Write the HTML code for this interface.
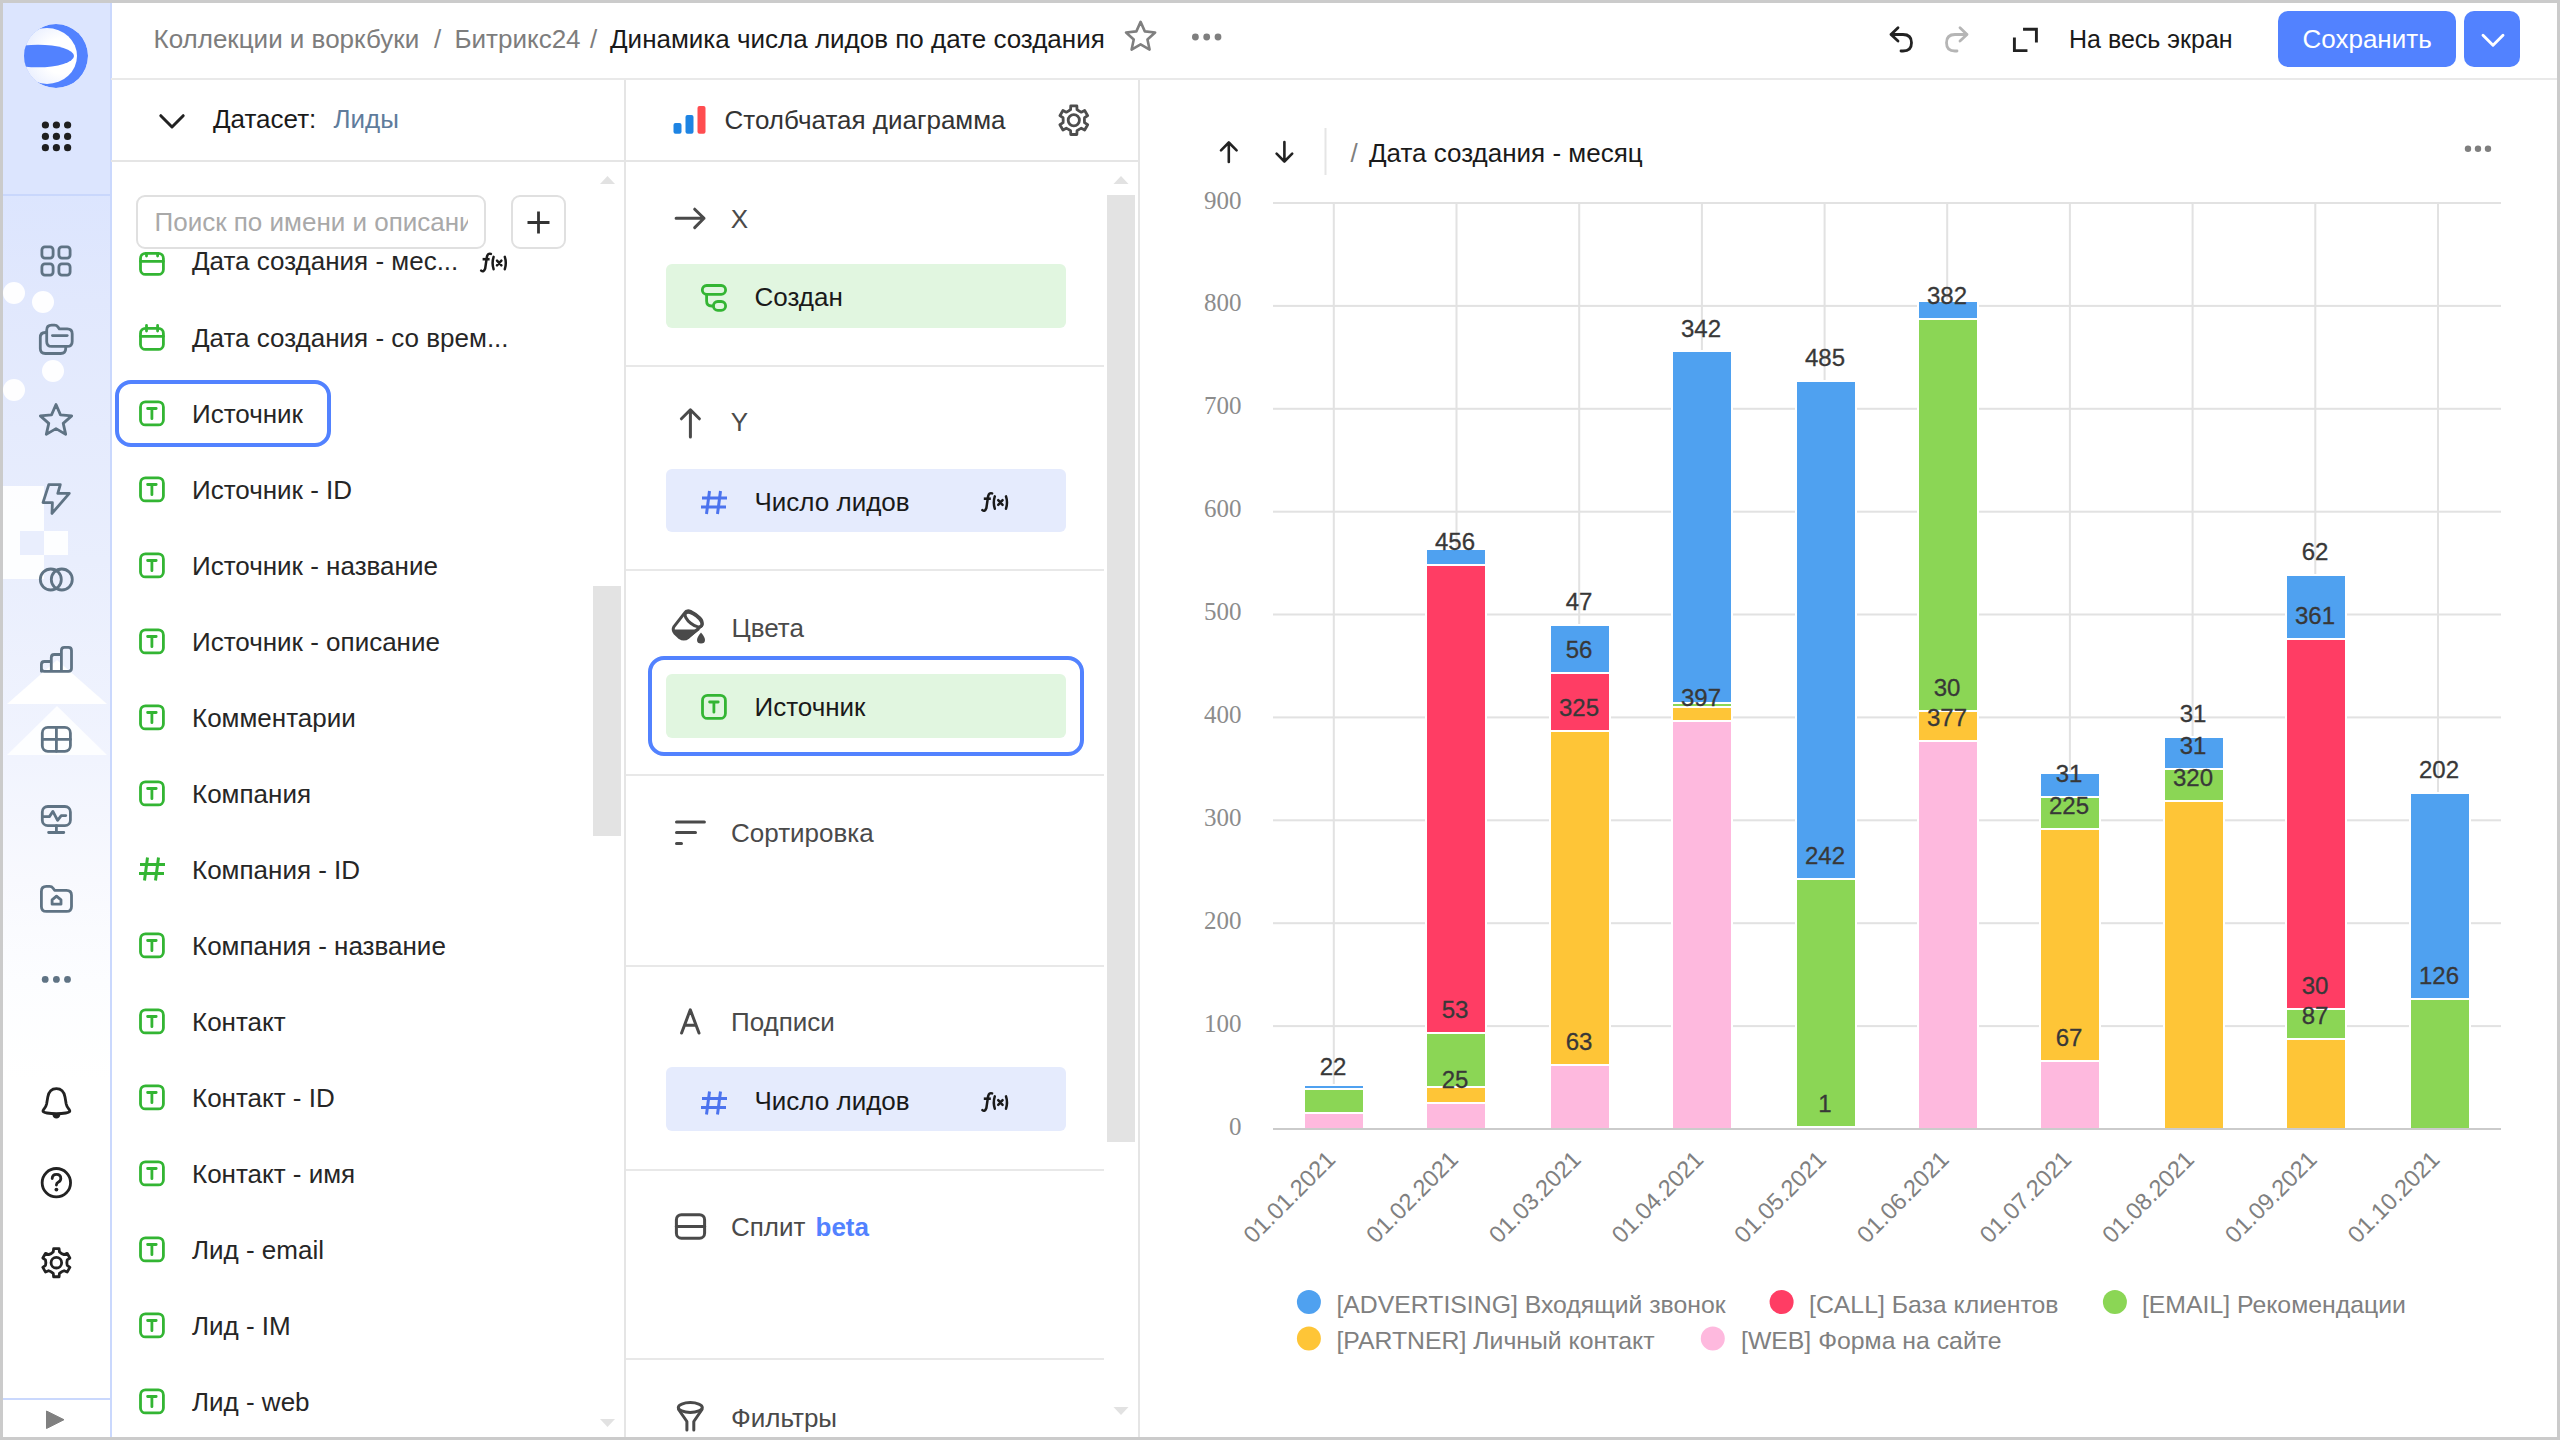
<!DOCTYPE html>
<html><head><meta charset="utf-8">
<style>
html,body{margin:0;padding:0;width:2560px;height:1440px;overflow:hidden;background:#cbcbcb;}
#app{position:absolute;left:3px;top:3px;width:2554px;height:1434px;background:#fff;overflow:hidden;}
#root{position:absolute;left:-3px;top:-3px;width:2560px;height:1440px;}
.t{position:absolute;white-space:nowrap;font-family:"Liberation Sans",sans-serif;}
svg{overflow:visible}
</style></head><body><div id="app"><div id="root">
<div style="position:absolute;left:0;top:0;width:111px;height:1440px;background:linear-gradient(180deg,#dce5fe 0px,#dce5fe 195px,#e1e8fd 300px,#e9eefd 560px,#f1f4fe 760px,#f8f9fe 880px,#fcfdff 980px,#ffffff 1080px);"></div>
<svg style="position:absolute;left:0;top:0" width="111" height="1440"><circle cx="14" cy="293" r="11" fill="#ffffff" opacity="0.95"/><circle cx="43" cy="302" r="11" fill="#ffffff" opacity="0.95"/><circle cx="53" cy="371" r="11" fill="#ffffff" opacity="0.95"/><circle cx="14" cy="390" r="11" fill="#ffffff" opacity="0.95"/><rect x="3" y="486" width="41" height="93" fill="#ffffff" opacity="0.9"/><rect x="20" y="531" width="24" height="24" fill="#e9eefd"/><rect x="44" y="531" width="24" height="24" fill="#ffffff" opacity="0.9"/><polygon points="7,704 57,660 107,704" fill="#ffffff" opacity="1"/><polygon points="7,755 57,706 107,755" fill="#ffffff" opacity="0.85"/></svg>
<div style="position:absolute;left:3px;top:194px;width:107px;height:2px;background:#c9d7fc;"></div>
<div style="position:absolute;left:110px;top:0px;width:2px;height:1440px;background:#cad8fd;"></div>
<div style="position:absolute;left:3px;top:1398px;width:107px;height:2px;background:#cad8fd;"></div>
<svg style="position:absolute;left:0;top:0" width="111" height="111">
<defs><clipPath id="lc"><circle cx="56" cy="56" r="32"/></clipPath>
<radialGradient id="lg" cx="0.75" cy="0.5" r="0.9"><stop offset="0.35" stop-color="#ffffff"/><stop offset="1" stop-color="#dbe4fe"/></radialGradient></defs>
<g clip-path="url(#lc)">
<circle cx="56" cy="56" r="32" fill="#5282ff"/>
<ellipse cx="47" cy="56" rx="30" ry="28" fill="url(#lg)"/>
<ellipse cx="38" cy="56" rx="36" ry="11.3" fill="#5282ff"/>
</g></svg>
<svg style="position:absolute;left:0;top:0" width="111" height="200"><circle cx="45.4" cy="125" r="3.6" fill="#1f1f1f"/><circle cx="56.4" cy="125" r="3.6" fill="#1f1f1f"/><circle cx="67.6" cy="125" r="3.6" fill="#1f1f1f"/><circle cx="45.4" cy="136.4" r="3.6" fill="#1f1f1f"/><circle cx="56.4" cy="136.4" r="3.6" fill="#1f1f1f"/><circle cx="67.6" cy="136.4" r="3.6" fill="#1f1f1f"/><circle cx="45.4" cy="147.7" r="3.6" fill="#1f1f1f"/><circle cx="56.4" cy="147.7" r="3.6" fill="#1f1f1f"/><circle cx="67.6" cy="147.7" r="3.6" fill="#1f1f1f"/></svg>
<svg style="position:absolute;left:0;top:0" width="111" height="1440"><rect x="41.9" y="246.9" width="11.2" height="11.2" rx="3" fill="none" stroke="#5f7384" stroke-width="2.8" stroke-linecap="round" stroke-linejoin="round"/><rect x="58.9" y="246.9" width="11.2" height="11.2" rx="3" fill="none" stroke="#5f7384" stroke-width="2.8" stroke-linecap="round" stroke-linejoin="round"/><rect x="41.9" y="263.9" width="11.2" height="11.2" rx="3" fill="none" stroke="#5f7384" stroke-width="2.8" stroke-linecap="round" stroke-linejoin="round"/><rect x="58.9" y="263.9" width="11.2" height="11.2" rx="3" fill="none" stroke="#5f7384" stroke-width="2.8" stroke-linecap="round" stroke-linejoin="round"/><path d="M46.7 330.2 Q46.7 325.2 51.7 325.2 L54.5 325.2 Q56.6 325.2 57.9 326.9 L59.3 328.8 L67.2 328.8 Q72.2 328.8 72.2 333.8 L72.2 341.4 Q72.2 346.4 67.2 346.4 L51.7 346.4 Q46.7 346.4 46.7 341.4 Z" fill="none" stroke="#5f7384" stroke-width="2.8" stroke-linecap="round" stroke-linejoin="round"/><path d="M46.7 332.5 L45.3 332.5 Q40.3 332.5 40.3 337.5 L40.3 348.5 Q40.3 353.5 45.3 353.5 L60.7 353.5 Q65.7 353.5 65.7 348.5 L65.7 346.4" fill="none" stroke="#5f7384" stroke-width="2.8" stroke-linecap="round" stroke-linejoin="round"/><path d="M52.4 335.6 L67.2 335.6" fill="none" stroke="#5f7384" stroke-width="2.8" stroke-linecap="round" stroke-linejoin="round"/><polygon points="56.00,404.50 60.47,414.85 71.69,415.90 63.23,423.35 65.70,434.35 56.00,428.60 46.30,434.35 48.77,423.35 40.31,415.90 51.53,414.85" fill="none" stroke="#5f7384" stroke-width="2.8" stroke-linecap="round" stroke-linejoin="round"/><path d="M48.8 484.6 L60.3 484.6 L57.8 493.4 L69.3 493.4 L52 513.4 L52.4 502.6 L43 502.6 Z" fill="none" stroke="#5f7384" stroke-width="2.8" stroke-linecap="round" stroke-linejoin="round"/><circle cx="50.8" cy="579.5" r="10.5" fill="none" stroke="#5f7384" stroke-width="2.8" stroke-linecap="round" stroke-linejoin="round"/><circle cx="61.8" cy="579.5" r="10.5" fill="none" stroke="#5f7384" stroke-width="2.8" stroke-linecap="round" stroke-linejoin="round"/><path d="M41.4 671.3 L41.4 664.5 Q41.4 661.5 44.4 661.5 L51.3 661.5 L51.3 657.5 Q51.3 654.5 54.3 654.5 L61.4 654.5 L61.4 650.4 Q61.4 647.4 64.4 647.4 L68.5 647.4 Q71.5 647.4 71.5 650.4 L71.5 668.3 Q71.5 671.3 68.5 671.3 L44.4 671.3 Q41.4 671.3 41.4 668.3 Z M51.3 661.5 V671.3 M61.4 654.5 V671.3" fill="none" stroke="#5f7384" stroke-width="2.8" stroke-linecap="round" stroke-linejoin="round"/><rect x="42.3" y="727.4" width="28.1" height="23.9" rx="5.5" fill="none" stroke="#5f7384" stroke-width="2.8" stroke-linecap="round" stroke-linejoin="round"/><path d="M56.4 727.4 V751.3 M42.3 739.4 H70.4" fill="none" stroke="#5f7384" stroke-width="2.8" stroke-linecap="round" stroke-linejoin="round"/><rect x="42.3" y="806.5" width="28.1" height="19.2" rx="5.5" fill="none" stroke="#5f7384" stroke-width="2.8" stroke-linecap="round" stroke-linejoin="round"/><path d="M56.4 825.7 V832.5 M48.6 832.5 H63.8" fill="none" stroke="#5f7384" stroke-width="2.8" stroke-linecap="round" stroke-linejoin="round"/><path d="M43.5 816.6 L49.4 816.6 L52.9 811.4 L57.6 820.3 L61.2 815.6 L65.8 815.6" fill="none" stroke="#5f7384" stroke-width="2.8" stroke-linecap="round" stroke-linejoin="round"/><path d="M41.4 891.4 Q41.4 886.4 46.4 886.4 L49.6 886.4 Q51.8 886.4 53.1 888.2 L54.6 890.3 L66.5 890.3 Q71.5 890.3 71.5 895.3 L71.5 906.4 Q71.5 911.4 66.5 911.4 L46.4 911.4 Q41.4 911.4 41.4 906.4 Z" fill="none" stroke="#5f7384" stroke-width="2.8" stroke-linecap="round" stroke-linejoin="round"/><path d="M52.1 899.9 L56.5 896.1 L61 899.9 L61 904.2 L52.1 904.2 Z" fill="none" stroke="#5f7384" stroke-width="2.8" stroke-linecap="round" stroke-linejoin="round"/><circle cx="45.2" cy="979.4" r="3.4" fill="#5f7384"/><circle cx="56.4" cy="979.4" r="3.4" fill="#5f7384"/><circle cx="67.5" cy="979.4" r="3.4" fill="#5f7384"/><path d="M56.4 1088.6 C50.5 1088.6 48.5 1093 47.8 1097 L46.6 1104 C46 1107 44.5 1108.5 43.5 1109.8 C42 1111.7 44 1112.6 47 1113 C50 1113.5 53 1113.7 56.4 1113.7 C59.8 1113.7 62.8 1113.5 65.8 1113 C68.8 1112.6 70.8 1111.7 69.3 1109.8 C68.3 1108.5 66.8 1107 66.2 1104 L65 1097 C64.3 1093 62.3 1088.6 56.4 1088.6 Z" fill="none" stroke="#222222" stroke-width="2.8" stroke-linecap="round" stroke-linejoin="round"/><path d="M52.3 1114.6 L60.5 1114.6 Q59.8 1118.5 56.4 1118.5 Q53 1118.5 52.3 1114.6 Z" fill="#222222"/><circle cx="56.35" cy="1182.7" r="14.2" fill="none" stroke="#222222" stroke-width="2.8" stroke-linecap="round" stroke-linejoin="round"/><path d="M52.2 1178.6 Q52.2 1174.3 56.5 1174.3 Q60.8 1174.3 60.8 1178.4 Q60.8 1180.8 58.5 1182 Q56.4 1183.2 56.4 1185" fill="none" stroke="#222222" stroke-width="2.8" stroke-linecap="round" stroke-linejoin="round"/><circle cx="56.4" cy="1189.6" r="1.9" fill="#222222"/><path d="M51.10 1253.61 L53.26 1251.93 L53.62 1248.66 L59.08 1248.66 L59.44 1251.93 L61.60 1253.61 L64.13 1254.64 L67.14 1253.32 L69.87 1258.04 L67.22 1259.99 L66.85 1262.70 L67.22 1265.41 L69.87 1267.36 L67.14 1272.08 L64.13 1270.76 L61.60 1271.79 L59.44 1273.47 L59.08 1276.74 L53.62 1276.74 L53.26 1273.47 L51.10 1271.79 L48.57 1270.76 L45.56 1272.08 L42.83 1267.36 L45.48 1265.41 L45.85 1262.70 L45.48 1259.99 L42.83 1258.04 L45.56 1253.32 L48.57 1254.64 Z" fill="none" stroke="#222222" stroke-width="2.8" stroke-linecap="round" stroke-linejoin="round"/><circle cx="56.35" cy="1262.7" r="5.3" fill="none" stroke="#222222" stroke-width="2.8" stroke-linecap="round" stroke-linejoin="round"/><path d="M46.5 1411 L46.5 1428.5 L64 1419.7 Z" fill="#808080" stroke="#808080" stroke-width="1" stroke-linejoin="round"/></svg>
<div style="position:absolute;left:111px;top:78px;width:2449px;height:2px;background:#e9e9e9;"></div>
<div class="t" style="left:153.5px;top:25.69px;font-size:26px;line-height:26px;color:#7d7d7d;font-weight:normal;font-family:"Liberation Sans", sans-serif;">Коллекции и воркбуки</div>
<div class="t" style="left:434px;top:25.69px;font-size:26px;line-height:26px;color:#7d7d7d;font-weight:normal;font-family:"Liberation Sans", sans-serif;">/</div>
<div class="t" style="left:454.5px;top:25.69px;font-size:26px;line-height:26px;color:#7d7d7d;font-weight:normal;font-family:"Liberation Sans", sans-serif;">Битрикс24</div>
<div class="t" style="left:590px;top:25.69px;font-size:26px;line-height:26px;color:#7d7d7d;font-weight:normal;font-family:"Liberation Sans", sans-serif;">/</div>
<div class="t" style="left:610px;top:25.69px;font-size:26px;line-height:26px;color:#1a1a1a;font-weight:normal;font-family:"Liberation Sans", sans-serif;">Динамика числа лидов по дате создания</div>
<svg style="position:absolute;left:0;top:0" width="2560" height="80"><polygon points="1140.60,21.90 1144.83,31.38 1155.15,32.47 1147.45,39.42 1149.59,49.58 1140.60,44.40 1131.61,49.58 1133.75,39.42 1126.05,32.47 1136.37,31.38" fill="none" stroke="#7f7f7f" stroke-width="2.6" stroke-linejoin="round"/><circle cx="1195.4" cy="37" r="3.4" fill="#7f7f7f"/><circle cx="1206.7" cy="37" r="3.4" fill="#7f7f7f"/><circle cx="1218" cy="37" r="3.4" fill="#7f7f7f"/><path d="M1891 34.5 L1898 27.8 M1891 34.5 L1898 41 M1891 34.5 L1903 34.5 Q1911.5 34.5 1911.5 42.7 Q1911.5 51 1903 51 L1901 51" fill="none" stroke="#222" stroke-width="2.8" stroke-linecap="round" stroke-linejoin="round"/><path d="M1967 34.5 L1960 27.8 M1967 34.5 L1960 41 M1967 34.5 L1955 34.5 Q1946.5 34.5 1946.5 42.7 Q1946.5 51 1955 51 L1957 51" fill="none" stroke="#b5b5b5" stroke-width="2.8" stroke-linecap="round" stroke-linejoin="round"/><path d="M2024.5 29.2 L2036.4 29.2 L2036.4 41 M2014.4 39 L2014.4 50.6 L2026 50.6" fill="none" stroke="#222" stroke-width="2.9" stroke-linecap="square"/></svg>
<div class="t" style="left:2069px;top:26.64px;font-size:25px;line-height:25px;color:#1a1a1a;font-weight:normal;font-family:"Liberation Sans", sans-serif;">На весь экран</div>
<div style="position:absolute;left:2278px;top:11px;width:178px;height:56px;background:#5282ff;border-radius:10px"></div>
<div class="t" style="left:2302.5px;top:25.99px;font-size:26px;line-height:26px;color:#ffffff;font-weight:normal;font-family:"Liberation Sans", sans-serif;">Сохранить</div>
<div style="position:absolute;left:2464px;top:11px;width:56px;height:56px;background:#5282ff;border-radius:10px"></div>
<svg style="position:absolute;left:0;top:0" width="2560" height="80"><path d="M2483 35.3 L2493 45.3 L2503 35.3" fill="none" stroke="#fff" stroke-width="2.9" stroke-linecap="round" stroke-linejoin="round"/></svg>
<div style="position:absolute;left:111px;top:160px;width:514px;height:2px;background:#e5e5e5;"></div>
<div style="position:absolute;left:624px;top:80px;width:2px;height:1360px;background:#e5e5e5;"></div>
<svg style="position:absolute;left:0;top:0" width="640" height="170"><path d="M160.8 115.7 L172 127 L183.2 115.7" fill="none" stroke="#222" stroke-width="3" stroke-linecap="round" stroke-linejoin="round"/></svg>
<div class="t" style="left:213px;top:105.69px;font-size:26px;line-height:26px;color:#1a1a1a;font-weight:normal;font-family:"Liberation Sans", sans-serif;">Датасет:</div>
<div class="t" style="left:333.5px;top:105.69px;font-size:26px;line-height:26px;color:#5f7c9c;font-weight:normal;font-family:"Liberation Sans", sans-serif;">Лиды</div>
<svg style="position:absolute;left:0;top:0" width="640" height="1440"><path d="M600 184 L607.5 176 L615 184 Z" fill="#e2e2e2"/><path d="M600 1419 L607.5 1427 L615 1419 Z" fill="#e2e2e2"/></svg>
<div style="position:absolute;left:593px;top:586px;width:28px;height:250px;background:#e3e3e3;"></div>
<div class="t" style="left:192px;top:248.19px;font-size:26px;line-height:26px;color:#262626;font-weight:normal;font-family:"Liberation Sans", sans-serif;">Дата создания - мес...</div>
<div class="t" style="left:192px;top:325.19px;font-size:26px;line-height:26px;color:#262626;font-weight:normal;font-family:"Liberation Sans", sans-serif;">Дата создания - со врем...</div>
<div class="t" style="left:192px;top:401.19px;font-size:26px;line-height:26px;color:#262626;font-weight:normal;font-family:"Liberation Sans", sans-serif;">Источник</div>
<div class="t" style="left:192px;top:477.19px;font-size:26px;line-height:26px;color:#262626;font-weight:normal;font-family:"Liberation Sans", sans-serif;">Источник - ID</div>
<div class="t" style="left:192px;top:553.19px;font-size:26px;line-height:26px;color:#262626;font-weight:normal;font-family:"Liberation Sans", sans-serif;">Источник - название</div>
<div class="t" style="left:192px;top:629.19px;font-size:26px;line-height:26px;color:#262626;font-weight:normal;font-family:"Liberation Sans", sans-serif;">Источник - описание</div>
<div class="t" style="left:192px;top:705.19px;font-size:26px;line-height:26px;color:#262626;font-weight:normal;font-family:"Liberation Sans", sans-serif;">Комментарии</div>
<div class="t" style="left:192px;top:781.19px;font-size:26px;line-height:26px;color:#262626;font-weight:normal;font-family:"Liberation Sans", sans-serif;">Компания</div>
<div class="t" style="left:192px;top:857.19px;font-size:26px;line-height:26px;color:#262626;font-weight:normal;font-family:"Liberation Sans", sans-serif;">Компания - ID</div>
<div class="t" style="left:192px;top:933.19px;font-size:26px;line-height:26px;color:#262626;font-weight:normal;font-family:"Liberation Sans", sans-serif;">Компания - название</div>
<div class="t" style="left:192px;top:1009.19px;font-size:26px;line-height:26px;color:#262626;font-weight:normal;font-family:"Liberation Sans", sans-serif;">Контакт</div>
<div class="t" style="left:192px;top:1085.19px;font-size:26px;line-height:26px;color:#262626;font-weight:normal;font-family:"Liberation Sans", sans-serif;">Контакт - ID</div>
<div class="t" style="left:192px;top:1161.19px;font-size:26px;line-height:26px;color:#262626;font-weight:normal;font-family:"Liberation Sans", sans-serif;">Контакт - имя</div>
<div class="t" style="left:192px;top:1237.19px;font-size:26px;line-height:26px;color:#262626;font-weight:normal;font-family:"Liberation Sans", sans-serif;">Лид - email</div>
<div class="t" style="left:192px;top:1313.19px;font-size:26px;line-height:26px;color:#262626;font-weight:normal;font-family:"Liberation Sans", sans-serif;">Лид - IM</div>
<div class="t" style="left:192px;top:1389.19px;font-size:26px;line-height:26px;color:#262626;font-weight:normal;font-family:"Liberation Sans", sans-serif;">Лид - web</div>
<svg style="position:absolute;left:0;top:0" width="640" height="1440"><rect x="140.5" y="253.4" width="22.9" height="21" rx="5" fill="none" stroke="#33b533" stroke-width="2.8"/><path d="M140.5 261.3 H163.4 M146.5 250.5 V256 M157.6 250.5 V256" stroke="#33b533" stroke-width="2.8" stroke-linecap="round"/><g transform="translate(0.00,0.00)"><path d="M481.2 270.6 Q483.6 272.6 485.2 268.5 L486.9 256.8 Q488 252.8 490.9 253.9" fill="none" stroke="#1a1a1a" stroke-width="2.5" stroke-linecap="round"/><path d="M482.6 259.2 H489.6" stroke="#1a1a1a" stroke-width="2.6"/><path d="M493.6 256.9 Q491.6 263 493.6 269.2 M504.8 256.9 Q506.8 263 504.8 269.2" fill="none" stroke="#1a1a1a" stroke-width="2.5" stroke-linecap="round" stroke-width="2.3"/><path d="M497 260.7 L501.4 265.3 M501.4 260.7 L497 265.3" fill="none" stroke="#1a1a1a" stroke-width="2.5" stroke-linecap="round" stroke-width="2.3"/></g><rect x="140.5" y="328.4" width="22.9" height="21" rx="5" fill="none" stroke="#33b533" stroke-width="2.8"/><path d="M140.5 336.3 H163.4 M146.5 325.5 V331.0 M157.6 325.5 V331.0" stroke="#33b533" stroke-width="2.8" stroke-linecap="round"/><rect x="140.5" y="401.9" width="22.9" height="23" rx="5" fill="none" stroke="#33b533" stroke-width="2.8"/><path d="M147.6 408.5 H156.2 M151.9 408.5 V418.7" stroke="#33b533" stroke-width="2.8" stroke-linecap="round"/><rect x="140.5" y="477.9" width="22.9" height="23" rx="5" fill="none" stroke="#33b533" stroke-width="2.8"/><path d="M147.6 484.5 H156.2 M151.9 484.5 V494.7" stroke="#33b533" stroke-width="2.8" stroke-linecap="round"/><rect x="140.5" y="553.9" width="22.9" height="23" rx="5" fill="none" stroke="#33b533" stroke-width="2.8"/><path d="M147.6 560.5 H156.2 M151.9 560.5 V570.7" stroke="#33b533" stroke-width="2.8" stroke-linecap="round"/><rect x="140.5" y="629.9" width="22.9" height="23" rx="5" fill="none" stroke="#33b533" stroke-width="2.8"/><path d="M147.6 636.5 H156.2 M151.9 636.5 V646.7" stroke="#33b533" stroke-width="2.8" stroke-linecap="round"/><rect x="140.5" y="705.9" width="22.9" height="23" rx="5" fill="none" stroke="#33b533" stroke-width="2.8"/><path d="M147.6 712.5 H156.2 M151.9 712.5 V722.7" stroke="#33b533" stroke-width="2.8" stroke-linecap="round"/><rect x="140.5" y="781.9" width="22.9" height="23" rx="5" fill="none" stroke="#33b533" stroke-width="2.8"/><path d="M147.6 788.5 H156.2 M151.9 788.5 V798.7" stroke="#33b533" stroke-width="2.8" stroke-linecap="round"/><path d="M147.5 857.5 L144.5 880.5 M158.5 857.5 L155.5 880.5 M140 864.5 H165 M139 873.5 H164" stroke="#33b533" stroke-width="3" stroke-linecap="butt"/><rect x="140.5" y="933.9" width="22.9" height="23" rx="5" fill="none" stroke="#33b533" stroke-width="2.8"/><path d="M147.6 940.5 H156.2 M151.9 940.5 V950.7" stroke="#33b533" stroke-width="2.8" stroke-linecap="round"/><rect x="140.5" y="1009.9" width="22.9" height="23" rx="5" fill="none" stroke="#33b533" stroke-width="2.8"/><path d="M147.6 1016.5 H156.2 M151.9 1016.5 V1026.7" stroke="#33b533" stroke-width="2.8" stroke-linecap="round"/><rect x="140.5" y="1085.9" width="22.9" height="23" rx="5" fill="none" stroke="#33b533" stroke-width="2.8"/><path d="M147.6 1092.5 H156.2 M151.9 1092.5 V1102.7" stroke="#33b533" stroke-width="2.8" stroke-linecap="round"/><rect x="140.5" y="1161.9" width="22.9" height="23" rx="5" fill="none" stroke="#33b533" stroke-width="2.8"/><path d="M147.6 1168.5 H156.2 M151.9 1168.5 V1178.7" stroke="#33b533" stroke-width="2.8" stroke-linecap="round"/><rect x="140.5" y="1237.9" width="22.9" height="23" rx="5" fill="none" stroke="#33b533" stroke-width="2.8"/><path d="M147.6 1244.5 H156.2 M151.9 1244.5 V1254.7" stroke="#33b533" stroke-width="2.8" stroke-linecap="round"/><rect x="140.5" y="1313.9" width="22.9" height="23" rx="5" fill="none" stroke="#33b533" stroke-width="2.8"/><path d="M147.6 1320.5 H156.2 M151.9 1320.5 V1330.7" stroke="#33b533" stroke-width="2.8" stroke-linecap="round"/><rect x="140.5" y="1389.9" width="22.9" height="23" rx="5" fill="none" stroke="#33b533" stroke-width="2.8"/><path d="M147.6 1396.5 H156.2 M151.9 1396.5 V1406.7" stroke="#33b533" stroke-width="2.8" stroke-linecap="round"/></svg>
<div style="position:absolute;left:112px;top:164px;width:477px;height:88px;background:#ffffff;"></div>
<div style="position:absolute;left:136px;top:195px;width:346px;height:50px;border:2px solid #e0e0e0;border-radius:9px;background:#fff"></div>
<div style="position:absolute;left:150px;top:200px;width:318px;height:44px;overflow:hidden"><div class="t" style="left:4.5px;top:8.79px;font-size:26px;line-height:26px;color:#a9a9a9;font-weight:normal;font-family:"Liberation Sans", sans-serif;">Поиск по имени и описанию</div></div>
<div style="position:absolute;left:511px;top:195px;width:51px;height:50px;border:2px solid #e0e0e0;border-radius:9px;background:#fff"></div>
<svg style="position:absolute;left:0;top:0" width="640" height="300"><path d="M538.5 211.5 V233.5 M527.5 222.5 H549.5" stroke="#333" stroke-width="2.8"/></svg>
<div style="position:absolute;left:115px;top:380px;width:208px;height:59px;border:4.5px solid #5282ff;border-radius:16px"></div>
<div style="position:absolute;left:626px;top:160px;width:512px;height:2px;background:#e5e5e5;"></div>
<div style="position:absolute;left:1138px;top:80px;width:2px;height:1360px;background:#e5e5e5;"></div>
<div style="position:absolute;left:626px;top:365px;width:478px;height:2px;background:#e8e8e8;"></div>
<div style="position:absolute;left:626px;top:569px;width:478px;height:2px;background:#e8e8e8;"></div>
<div style="position:absolute;left:626px;top:774px;width:478px;height:2px;background:#e8e8e8;"></div>
<div style="position:absolute;left:626px;top:965px;width:478px;height:2px;background:#e8e8e8;"></div>
<div style="position:absolute;left:626px;top:1169px;width:478px;height:2px;background:#e8e8e8;"></div>
<div style="position:absolute;left:626px;top:1358px;width:478px;height:2px;background:#e8e8e8;"></div>
<svg style="position:absolute;left:0;top:0" width="1140" height="1440"><rect x="673.5" y="123.1" width="8" height="10.6" rx="2" fill="#1e84e3"/><rect x="685.5" y="115.1" width="8" height="18.6" rx="2" fill="#1e84e3"/><rect x="697.5" y="106.1" width="8" height="27.6" rx="2" fill="#ff4d50"/><path d="M1068.50 111.02 L1070.58 109.68 L1070.76 105.92 L1076.84 105.92 L1077.02 109.68 L1079.10 111.02 L1081.30 112.16 L1084.65 110.43 L1087.69 115.69 L1084.52 117.73 L1084.40 120.20 L1084.52 122.67 L1087.69 124.71 L1084.65 129.97 L1081.30 128.24 L1079.10 129.38 L1077.02 130.72 L1076.84 134.48 L1070.76 134.48 L1070.58 130.72 L1068.50 129.38 L1066.30 128.24 L1062.95 129.97 L1059.91 124.71 L1063.08 122.67 L1063.20 120.20 L1063.08 117.73 L1059.91 115.69 L1062.95 110.43 L1066.30 112.16 Z" fill="none" stroke="#4d4d4d" stroke-width="2.8" stroke-linejoin="round"/><circle cx="1073.8" cy="120.2" r="5.6" fill="none" stroke="#4d4d4d" stroke-width="2.8"/><path d="M1113.5 184 L1121 176 L1128.5 184 Z" fill="#e2e2e2"/><path d="M1113.5 1407 L1121 1415 L1128.5 1407 Z" fill="#e2e2e2"/><path d="M676.1 218.3 H704 M694.7 209.2 L704 218.3 L694.7 227.6" fill="none" stroke="#4a4a4a" stroke-width="3" stroke-linecap="round" stroke-linejoin="round"/><path d="M690.4 437 V409.8 M681.4 418.8 L690.4 409.8 L699.4 418.8" fill="none" stroke="#4a4a4a" stroke-width="3" stroke-linecap="round" stroke-linejoin="round"/><path d="M684.3 613.3 Q686.6 609.8 690.6 611.4 Q695.5 613.8 699.8 617.8 Q703.6 621.6 701.6 625.6 L688.5 637.2 Q684 640.6 679.8 637.8 L675 633.4 Q672 630.2 674 626.6 Z" fill="none" stroke="#4a4a4a" stroke-width="3" stroke-linecap="round" stroke-linejoin="round" stroke-width="2.8"/><ellipse cx="693.6" cy="619.6" rx="10.2" ry="4.6" transform="rotate(38 693.6 619.6)" fill="none" stroke="#4a4a4a" stroke-width="3" stroke-linecap="round" stroke-linejoin="round" stroke-width="2.8"/><path d="M673.6 629.6 L700.2 629.6 L688.5 638.5 Q684 641 680 638.4 L675.2 634.2 Q672.8 631.8 673.6 629.6 Z" fill="#4a4a4a"/><path d="M701 632.6 Q697 637.3 697 640 Q697 643.5 701 643.5 Q705 643.5 705 640 Q705 637.3 701 632.6 Z" fill="#4a4a4a"/><path d="M676.5 822 H704.4 M676.5 832.4 H695.5 M676.5 843.4 H681.5" fill="none" stroke="#4a4a4a" stroke-width="3" stroke-linecap="round" stroke-linejoin="round"/><path d="M681.6 1033 L690.3 1009.8 L699 1033 M684.6 1025.2 H696" fill="none" stroke="#4a4a4a" stroke-width="3" stroke-linecap="round" stroke-linejoin="round" stroke-width="2.9" stroke-linecap="butt" stroke-linejoin="miter"/><rect x="676.4" y="1214.7" width="28.2" height="23.5" rx="5" fill="none" stroke="#4a4a4a" stroke-width="3" stroke-linecap="round" stroke-linejoin="round" stroke-width="2.8"/><path d="M676.4 1226.5 H704.6" fill="none" stroke="#4a4a4a" stroke-width="3" stroke-linecap="round" stroke-linejoin="round" stroke-width="2.8"/><ellipse cx="690.3" cy="1407.5" rx="12" ry="4.9" fill="none" stroke="#4a4a4a" stroke-width="3" stroke-linecap="round" stroke-linejoin="round" stroke-width="2.9"/><path d="M678.6 1409.5 L686.9 1421.5 V1430 M702 1409.5 L693.8 1421.5 V1430" fill="none" stroke="#4a4a4a" stroke-width="3" stroke-linecap="round" stroke-linejoin="round" stroke-width="2.9" stroke-linecap="butt"/></svg>
<div style="position:absolute;left:1107px;top:195px;width:28px;height:947px;background:#e3e3e3;"></div>
<div class="t" style="left:724.5px;top:106.69px;font-size:26px;line-height:26px;color:#333333;font-weight:normal;font-family:"Liberation Sans", sans-serif;">Столбчатая диаграмма</div>
<div class="t" style="left:730.8px;top:205.99px;font-size:26px;line-height:26px;color:#4a4a4a;font-weight:normal;font-family:"Liberation Sans", sans-serif;">X</div>
<div class="t" style="left:730.8px;top:408.99px;font-size:26px;line-height:26px;color:#4a4a4a;font-weight:normal;font-family:"Liberation Sans", sans-serif;">Y</div>
<div class="t" style="left:731.5px;top:614.69px;font-size:26px;line-height:26px;color:#4a4a4a;font-weight:normal;font-family:"Liberation Sans", sans-serif;">Цвета</div>
<div class="t" style="left:731px;top:819.79px;font-size:26px;line-height:26px;color:#4a4a4a;font-weight:normal;font-family:"Liberation Sans", sans-serif;">Сортировка</div>
<div class="t" style="left:731px;top:1008.99px;font-size:26px;line-height:26px;color:#4a4a4a;font-weight:normal;font-family:"Liberation Sans", sans-serif;">Подписи</div>
<div class="t" style="left:731px;top:1214.29px;font-size:26px;line-height:26px;color:#4a4a4a;font-weight:normal;font-family:"Liberation Sans", sans-serif;">Сплит</div>
<div class="t" style="left:815.5px;top:1214.29px;font-size:26px;line-height:26px;color:#5282ff;font-weight:bold;font-family:"Liberation Sans", sans-serif;">beta</div>
<div class="t" style="left:731px;top:1404.69px;font-size:26px;line-height:26px;color:#4a4a4a;font-weight:normal;font-family:"Liberation Sans", sans-serif;">Фильтры</div>
<div style="position:absolute;left:666px;top:264px;width:400px;height:64px;background:#e1f6e0;border-radius:6px"></div>
<div style="position:absolute;left:666px;top:469px;width:400px;height:63px;background:#e5ebfd;border-radius:6px"></div>
<div style="position:absolute;left:666px;top:674px;width:400px;height:64px;background:#e1f6e0;border-radius:6px"></div>
<div style="position:absolute;left:666px;top:1067px;width:400px;height:64px;background:#e5ebfd;border-radius:6px"></div>
<div style="position:absolute;left:648px;top:656px;width:428px;height:92px;border:4px solid #5282ff;border-radius:16px"></div>
<div class="t" style="left:754.5px;top:283.69px;font-size:26px;line-height:26px;color:#1a1a1a;font-weight:normal;font-family:"Liberation Sans", sans-serif;">Создан</div>
<div class="t" style="left:754.5px;top:488.79px;font-size:26px;line-height:26px;color:#1a1a1a;font-weight:normal;font-family:"Liberation Sans", sans-serif;">Число лидов</div>
<div class="t" style="left:754.5px;top:693.99px;font-size:26px;line-height:26px;color:#1a1a1a;font-weight:normal;font-family:"Liberation Sans", sans-serif;">Источник</div>
<div class="t" style="left:754.5px;top:1088.49px;font-size:26px;line-height:26px;color:#1a1a1a;font-weight:normal;font-family:"Liberation Sans", sans-serif;">Число лидов</div>
<svg style="position:absolute;left:0;top:0" width="1140" height="1440"><rect x="702.3" y="285.5" width="23.3" height="8.9" rx="4.4" fill="none" stroke="#33b533" stroke-width="2.8" stroke-linecap="round" stroke-linejoin="round"/><rect x="713.4" y="301.5" width="12.2" height="8.9" rx="4.4" fill="none" stroke="#33b533" stroke-width="2.8" stroke-linecap="round" stroke-linejoin="round"/><path d="M706.6 294.4 V301 Q706.6 306 711.6 306 H713.4" fill="none" stroke="#33b533" stroke-width="2.8" stroke-linecap="round" stroke-linejoin="round"/><path d="M709.5 491 L706.5 514 M720.5 491 L717.5 514 M702 498 H727 M701 507 H726" stroke="#4c73ee" stroke-width="3" stroke-linecap="butt"/><g transform="translate(501.20,239.50)"><path d="M481.2 270.6 Q483.6 272.6 485.2 268.5 L486.9 256.8 Q488 252.8 490.9 253.9" fill="none" stroke="#1a1a1a" stroke-width="2.5" stroke-linecap="round"/><path d="M482.6 259.2 H489.6" stroke="#1a1a1a" stroke-width="2.6"/><path d="M493.6 256.9 Q491.6 263 493.6 269.2 M504.8 256.9 Q506.8 263 504.8 269.2" fill="none" stroke="#1a1a1a" stroke-width="2.5" stroke-linecap="round" stroke-width="2.3"/><path d="M497 260.7 L501.4 265.3 M501.4 260.7 L497 265.3" fill="none" stroke="#1a1a1a" stroke-width="2.5" stroke-linecap="round" stroke-width="2.3"/></g><rect x="702.5" y="695.4" width="22.9" height="23" rx="5" fill="none" stroke="#33b533" stroke-width="2.8"/><path d="M709.6 702 H718.2 M713.9 702 V712.2" stroke="#33b533" stroke-width="2.8" stroke-linecap="round"/><path d="M709.5 1091.5 L706.5 1114.5 M720.5 1091.5 L717.5 1114.5 M702 1098.5 H727 M701 1107.5 H726" stroke="#4c73ee" stroke-width="3" stroke-linecap="butt"/><g transform="translate(501.20,839.50)"><path d="M481.2 270.6 Q483.6 272.6 485.2 268.5 L486.9 256.8 Q488 252.8 490.9 253.9" fill="none" stroke="#1a1a1a" stroke-width="2.5" stroke-linecap="round"/><path d="M482.6 259.2 H489.6" stroke="#1a1a1a" stroke-width="2.6"/><path d="M493.6 256.9 Q491.6 263 493.6 269.2 M504.8 256.9 Q506.8 263 504.8 269.2" fill="none" stroke="#1a1a1a" stroke-width="2.5" stroke-linecap="round" stroke-width="2.3"/><path d="M497 260.7 L501.4 265.3 M501.4 260.7 L497 265.3" fill="none" stroke="#1a1a1a" stroke-width="2.5" stroke-linecap="round" stroke-width="2.3"/></g></svg>
<svg style="position:absolute;left:0;top:0" width="2560" height="1440"><path d="M1228.8 162 V142.5 M1221 150.3 L1228.8 142.5 L1236.6 150.3" fill="none" stroke="#222" stroke-width="2.6" stroke-linecap="round" stroke-linejoin="round"/><path d="M1284.4 142 V161.5 M1276.6 153.7 L1284.4 161.5 L1292.2 153.7" fill="none" stroke="#222" stroke-width="2.6" stroke-linecap="round" stroke-linejoin="round"/><rect x="1324.5" y="128" width="2" height="47" fill="#e5e5e5"/><circle cx="2468" cy="148.7" r="3.2" fill="#7f7f7f"/><circle cx="2478" cy="148.7" r="3.2" fill="#7f7f7f"/><circle cx="2488" cy="148.7" r="3.2" fill="#7f7f7f"/><rect x="1273" y="1025.1" width="1228" height="2" fill="#e2e2e2"/><rect x="1273" y="922.2" width="1228" height="2" fill="#e2e2e2"/><rect x="1273" y="819.3" width="1228" height="2" fill="#e2e2e2"/><rect x="1273" y="716.4" width="1228" height="2" fill="#e2e2e2"/><rect x="1273" y="613.5" width="1228" height="2" fill="#e2e2e2"/><rect x="1273" y="510.7" width="1228" height="2" fill="#e2e2e2"/><rect x="1273" y="407.8" width="1228" height="2" fill="#e2e2e2"/><rect x="1273" y="304.9" width="1228" height="2" fill="#e2e2e2"/><rect x="1273" y="202.0" width="1228" height="2" fill="#e2e2e2"/><rect x="1332.8" y="203" width="2" height="925" fill="#e2e2e2"/><rect x="1455.5" y="203" width="2" height="925" fill="#e2e2e2"/><rect x="1578.2" y="203" width="2" height="925" fill="#e2e2e2"/><rect x="1700.9" y="203" width="2" height="925" fill="#e2e2e2"/><rect x="1823.6" y="203" width="2" height="925" fill="#e2e2e2"/><rect x="1946.2" y="203" width="2" height="925" fill="#e2e2e2"/><rect x="2068.9" y="203" width="2" height="925" fill="#e2e2e2"/><rect x="2191.6" y="203" width="2" height="925" fill="#e2e2e2"/><rect x="2314.3" y="203" width="2" height="925" fill="#e2e2e2"/><rect x="2437.0" y="203" width="2" height="925" fill="#e2e2e2"/><rect x="1303" y="1084" width="62" height="44" fill="#ffffff"/><rect x="1305" y="1086" width="58" height="2" fill="#4fa1f0"/><rect x="1305" y="1090" width="58" height="22" fill="#8bd655"/><rect x="1305" y="1114" width="58" height="14" fill="#feb9de"/><rect x="1425" y="548" width="62" height="580" fill="#ffffff"/><rect x="1427" y="550" width="58" height="14" fill="#4fa1f0"/><rect x="1427" y="566" width="58" height="466" fill="#ff3d64"/><rect x="1427" y="1034" width="58" height="52" fill="#8bd655"/><rect x="1427" y="1088" width="58" height="14" fill="#fec537"/><rect x="1427" y="1104" width="58" height="24" fill="#feb9de"/><rect x="1549" y="624" width="62" height="504" fill="#ffffff"/><rect x="1551" y="626" width="58" height="46" fill="#4fa1f0"/><rect x="1551" y="674" width="58" height="56" fill="#ff3d64"/><rect x="1551" y="732" width="58" height="332" fill="#fec537"/><rect x="1551" y="1066" width="58" height="62" fill="#feb9de"/><rect x="1671" y="350" width="62" height="778" fill="#ffffff"/><rect x="1673" y="352" width="58" height="350" fill="#4fa1f0"/><rect x="1673" y="704" width="58" height="2" fill="#8bd655"/><rect x="1673" y="708" width="58" height="12" fill="#fec537"/><rect x="1673" y="722" width="58" height="406" fill="#feb9de"/><rect x="1795" y="380" width="62" height="748" fill="#ffffff"/><rect x="1797" y="382" width="58" height="496" fill="#4fa1f0"/><rect x="1797" y="880" width="58" height="246" fill="#8bd655"/><rect x="1917" y="300" width="62" height="828" fill="#ffffff"/><rect x="1919" y="302" width="58" height="16" fill="#4fa1f0"/><rect x="1919" y="320" width="58" height="390" fill="#8bd655"/><rect x="1919" y="712" width="58" height="28" fill="#fec537"/><rect x="1919" y="742" width="58" height="386" fill="#feb9de"/><rect x="2039" y="772" width="62" height="356" fill="#ffffff"/><rect x="2041" y="774" width="58" height="22" fill="#4fa1f0"/><rect x="2041" y="798" width="58" height="30" fill="#8bd655"/><rect x="2041" y="830" width="58" height="230" fill="#fec537"/><rect x="2041" y="1062" width="58" height="66" fill="#feb9de"/><rect x="2163" y="736" width="62" height="392" fill="#ffffff"/><rect x="2165" y="738" width="58" height="30" fill="#4fa1f0"/><rect x="2165" y="770" width="58" height="30" fill="#8bd655"/><rect x="2165" y="802" width="58" height="326" fill="#fec537"/><rect x="2285" y="574" width="62" height="554" fill="#ffffff"/><rect x="2287" y="576" width="58" height="62" fill="#4fa1f0"/><rect x="2287" y="640" width="58" height="368" fill="#ff3d64"/><rect x="2287" y="1010" width="58" height="28" fill="#8bd655"/><rect x="2287" y="1040" width="58" height="88" fill="#fec537"/><rect x="2409" y="792" width="62" height="336" fill="#ffffff"/><rect x="2411" y="794" width="58" height="204" fill="#4fa1f0"/><rect x="2411" y="1000" width="58" height="128" fill="#8bd655"/><rect x="1273" y="1128" width="1228" height="2" fill="#cbcbcb"/><text x="1241.5" y="1134.5" text-anchor="end" font-family="Liberation Serif" font-size="25" fill="#8c8c8c">0</text><text x="1241.5" y="1031.6" text-anchor="end" font-family="Liberation Serif" font-size="25" fill="#8c8c8c">100</text><text x="1241.5" y="928.7" text-anchor="end" font-family="Liberation Serif" font-size="25" fill="#8c8c8c">200</text><text x="1241.5" y="825.8" text-anchor="end" font-family="Liberation Serif" font-size="25" fill="#8c8c8c">300</text><text x="1241.5" y="722.9" text-anchor="end" font-family="Liberation Serif" font-size="25" fill="#8c8c8c">400</text><text x="1241.5" y="620.0" text-anchor="end" font-family="Liberation Serif" font-size="25" fill="#8c8c8c">500</text><text x="1241.5" y="517.2" text-anchor="end" font-family="Liberation Serif" font-size="25" fill="#8c8c8c">600</text><text x="1241.5" y="414.3" text-anchor="end" font-family="Liberation Serif" font-size="25" fill="#8c8c8c">700</text><text x="1241.5" y="311.4" text-anchor="end" font-family="Liberation Serif" font-size="25" fill="#8c8c8c">800</text><text x="1241.5" y="208.5" text-anchor="end" font-family="Liberation Serif" font-size="25" fill="#8c8c8c">900</text><text x="1333" y="1075" text-anchor="middle" font-family="Liberation Sans" font-size="24" fill="#383838" stroke="#383838" stroke-width="0.3">22</text><text x="1455" y="549.8" text-anchor="middle" font-family="Liberation Sans" font-size="24" fill="#383838" stroke="#383838" stroke-width="0.3">456</text><text x="1455" y="1018.3" text-anchor="middle" font-family="Liberation Sans" font-size="24" fill="#383838" stroke="#383838" stroke-width="0.3">53</text><text x="1455" y="1087.8" text-anchor="middle" font-family="Liberation Sans" font-size="24" fill="#383838" stroke="#383838" stroke-width="0.3">25</text><text x="1579" y="610.1" text-anchor="middle" font-family="Liberation Sans" font-size="24" fill="#383838" stroke="#383838" stroke-width="0.3">47</text><text x="1579" y="658.3" text-anchor="middle" font-family="Liberation Sans" font-size="24" fill="#383838" stroke="#383838" stroke-width="0.3">56</text><text x="1579" y="715.9" text-anchor="middle" font-family="Liberation Sans" font-size="24" fill="#383838" stroke="#383838" stroke-width="0.3">325</text><text x="1579" y="1050.2" text-anchor="middle" font-family="Liberation Sans" font-size="24" fill="#383838" stroke="#383838" stroke-width="0.3">63</text><text x="1701" y="336.7" text-anchor="middle" font-family="Liberation Sans" font-size="24" fill="#383838" stroke="#383838" stroke-width="0.3">342</text><text x="1701" y="706.1" text-anchor="middle" font-family="Liberation Sans" font-size="24" fill="#383838" stroke="#383838" stroke-width="0.3">397</text><text x="1825" y="366.25" text-anchor="middle" font-family="Liberation Sans" font-size="24" fill="#383838" stroke="#383838" stroke-width="0.3">485</text><text x="1825" y="864.4" text-anchor="middle" font-family="Liberation Sans" font-size="24" fill="#383838" stroke="#383838" stroke-width="0.3">242</text><text x="1825" y="1112" text-anchor="middle" font-family="Liberation Sans" font-size="24" fill="#383838" stroke="#383838" stroke-width="0.3">1</text><text x="1947" y="304.2" text-anchor="middle" font-family="Liberation Sans" font-size="24" fill="#383838" stroke="#383838" stroke-width="0.3">382</text><text x="1947" y="696.4" text-anchor="middle" font-family="Liberation Sans" font-size="24" fill="#383838" stroke="#383838" stroke-width="0.3">30</text><text x="1947" y="726.1" text-anchor="middle" font-family="Liberation Sans" font-size="24" fill="#383838" stroke="#383838" stroke-width="0.3">377</text><text x="2069" y="782.2" text-anchor="middle" font-family="Liberation Sans" font-size="24" fill="#383838" stroke="#383838" stroke-width="0.3">31</text><text x="2069" y="814.2" text-anchor="middle" font-family="Liberation Sans" font-size="24" fill="#383838" stroke="#383838" stroke-width="0.3">225</text><text x="2069" y="1045.9" text-anchor="middle" font-family="Liberation Sans" font-size="24" fill="#383838" stroke="#383838" stroke-width="0.3">67</text><text x="2193" y="722.3" text-anchor="middle" font-family="Liberation Sans" font-size="24" fill="#383838" stroke="#383838" stroke-width="0.3">31</text><text x="2193" y="754" text-anchor="middle" font-family="Liberation Sans" font-size="24" fill="#383838" stroke="#383838" stroke-width="0.3">31</text><text x="2193" y="786.4" text-anchor="middle" font-family="Liberation Sans" font-size="24" fill="#383838" stroke="#383838" stroke-width="0.3">320</text><text x="2315" y="560.4" text-anchor="middle" font-family="Liberation Sans" font-size="24" fill="#383838" stroke="#383838" stroke-width="0.3">62</text><text x="2315" y="624.3" text-anchor="middle" font-family="Liberation Sans" font-size="24" fill="#383838" stroke="#383838" stroke-width="0.3">361</text><text x="2315" y="993.8" text-anchor="middle" font-family="Liberation Sans" font-size="24" fill="#383838" stroke="#383838" stroke-width="0.3">30</text><text x="2315" y="1023.8" text-anchor="middle" font-family="Liberation Sans" font-size="24" fill="#383838" stroke="#383838" stroke-width="0.3">87</text><text x="2439" y="778.3" text-anchor="middle" font-family="Liberation Sans" font-size="24" fill="#383838" stroke="#383838" stroke-width="0.3">202</text><text x="2439" y="983.9" text-anchor="middle" font-family="Liberation Sans" font-size="24" fill="#383838" stroke="#383838" stroke-width="0.3">126</text><text x="1336.8" y="1161" text-anchor="end" transform="rotate(-45 1336.8 1161)" font-family="Liberation Sans" font-size="23.6" fill="#808080">01.01.2021</text><text x="1459.5" y="1161" text-anchor="end" transform="rotate(-45 1459.5 1161)" font-family="Liberation Sans" font-size="23.6" fill="#808080">01.02.2021</text><text x="1582.2" y="1161" text-anchor="end" transform="rotate(-45 1582.2 1161)" font-family="Liberation Sans" font-size="23.6" fill="#808080">01.03.2021</text><text x="1704.9" y="1161" text-anchor="end" transform="rotate(-45 1704.9 1161)" font-family="Liberation Sans" font-size="23.6" fill="#808080">01.04.2021</text><text x="1827.6" y="1161" text-anchor="end" transform="rotate(-45 1827.6 1161)" font-family="Liberation Sans" font-size="23.6" fill="#808080">01.05.2021</text><text x="1950.2" y="1161" text-anchor="end" transform="rotate(-45 1950.2 1161)" font-family="Liberation Sans" font-size="23.6" fill="#808080">01.06.2021</text><text x="2072.9" y="1161" text-anchor="end" transform="rotate(-45 2072.9 1161)" font-family="Liberation Sans" font-size="23.6" fill="#808080">01.07.2021</text><text x="2195.6" y="1161" text-anchor="end" transform="rotate(-45 2195.6 1161)" font-family="Liberation Sans" font-size="23.6" fill="#808080">01.08.2021</text><text x="2318.3" y="1161" text-anchor="end" transform="rotate(-45 2318.3 1161)" font-family="Liberation Sans" font-size="23.6" fill="#808080">01.09.2021</text><text x="2441.0" y="1161" text-anchor="end" transform="rotate(-45 2441.0 1161)" font-family="Liberation Sans" font-size="23.6" fill="#808080">01.10.2021</text><circle cx="1308.9" cy="1302" r="12" fill="#4fa1f0"/><circle cx="1781.6" cy="1302" r="12" fill="#ff3d64"/><circle cx="2114.9" cy="1302" r="12" fill="#8bd655"/><circle cx="1308.9" cy="1338.5" r="12" fill="#fec537"/><circle cx="1712.8" cy="1338.5" r="12" fill="#feb9de"/><text x="1336.4" y="1312.5" font-family="Liberation Sans" font-size="24.8" fill="#808080">[ADVERTISING] Входящий звонок</text><text x="1809" y="1312.5" font-family="Liberation Sans" font-size="24.8" fill="#808080">[CALL] База клиентов</text><text x="2141.9" y="1312.5" font-family="Liberation Sans" font-size="24.8" fill="#808080">[EMAIL] Рекомендации</text><text x="1336.4" y="1348.6" font-family="Liberation Sans" font-size="24.8" fill="#808080">[PARTNER] Личный контакт</text><text x="1741" y="1348.6" font-family="Liberation Sans" font-size="24.8" fill="#808080">[WEB] Форма на сайте</text></svg>
<div class="t" style="left:1350.5px;top:139.99px;font-size:26px;line-height:26px;color:#7f7f7f;font-weight:normal;font-family:"Liberation Sans", sans-serif;">/</div>
<div class="t" style="left:1369px;top:139.99px;font-size:26px;line-height:26px;color:#1a1a1a;font-weight:normal;font-family:"Liberation Sans", sans-serif;">Дата создания - месяц</div></div></div></body></html>
